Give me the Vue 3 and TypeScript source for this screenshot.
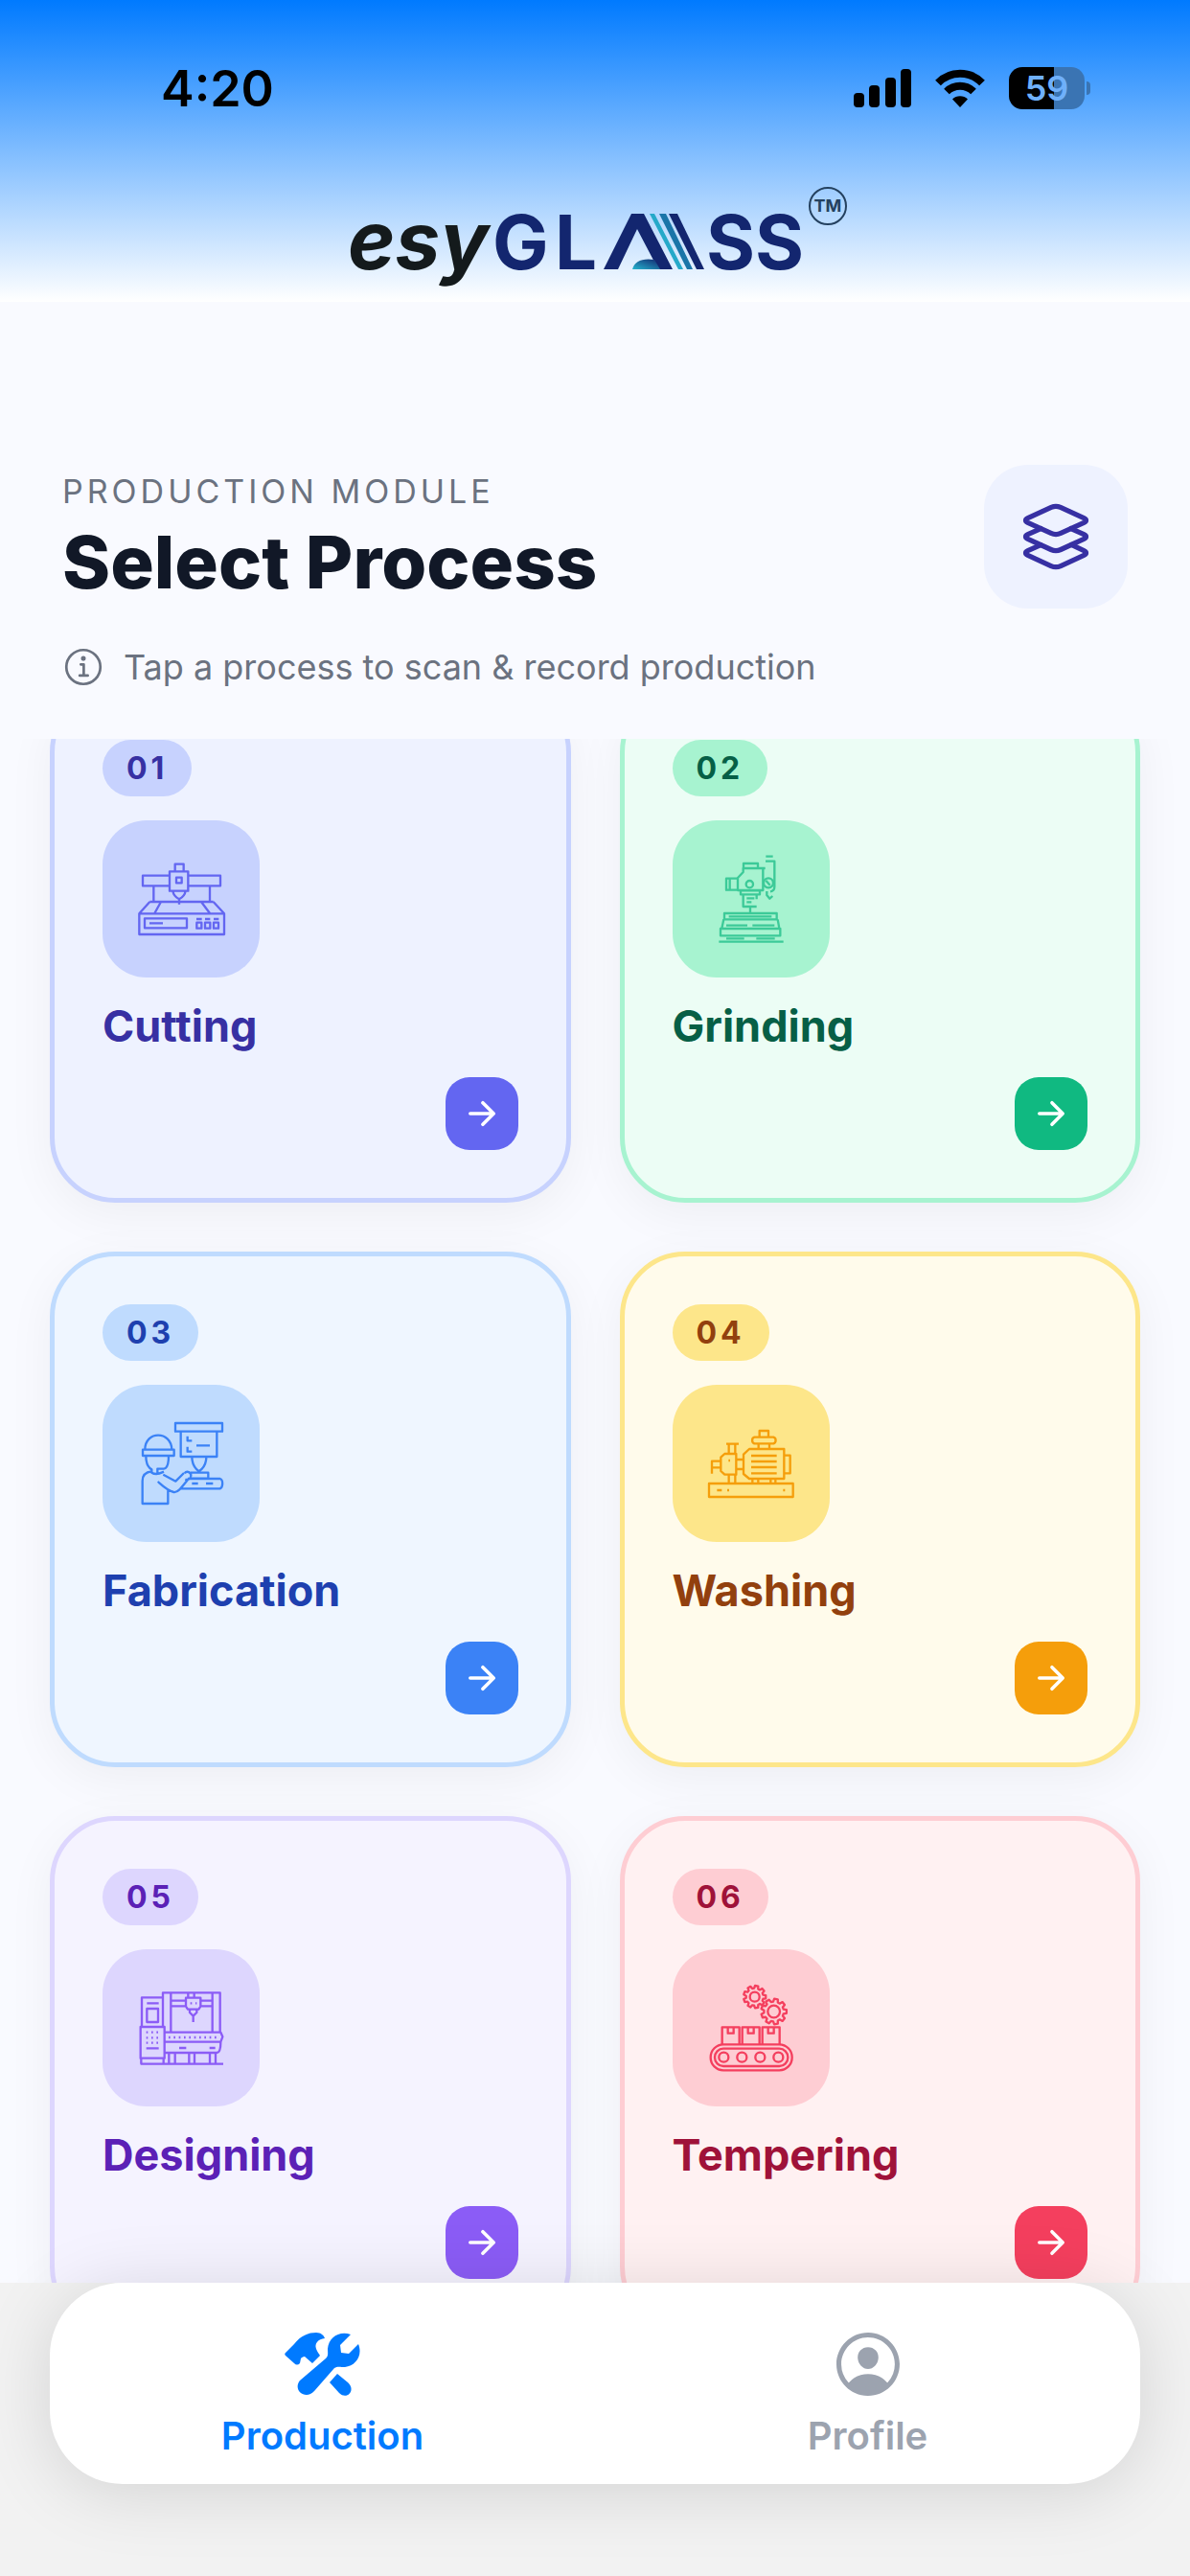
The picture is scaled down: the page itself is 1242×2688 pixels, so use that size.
<script setup lang="ts">
interface Process {
  number: string
  name: string
  icon: 'cutting' | 'grinding' | 'fabrication' | 'washing' | 'designing' | 'tempering'
}

const processes: Process[] = [
  { number: '01', name: 'Cutting', icon: 'cutting' },
  { number: '02', name: 'Grinding', icon: 'grinding' },
  { number: '03', name: 'Fabrication', icon: 'fabrication' },
  { number: '04', name: 'Washing', icon: 'washing' },
  { number: '05', name: 'Designing', icon: 'designing' },
  { number: '06', name: 'Tempering', icon: 'tempering' },
]

const gear = (cx: number, cy: number, outer: number, inner: number, teeth: number): string => {
  const points: string[] = []
  const step = (Math.PI * 2) / teeth
  for (let i = 0; i < teeth; i++) {
    const corners: [number, number][] = [[-0.34, inner], [-0.2, outer], [0.2, outer], [0.34, inner]]
    for (const [offset, radius] of corners) {
      const angle = (i + offset) * step
      points.push(`${(cx + radius * Math.cos(angle)).toFixed(1)},${(cy + radius * Math.sin(angle)).toFixed(1)}`)
    }
  }
  return points.join(' ')
}

const smallGear = gear(265, 159, 35, 27, 9)
const largeGear = gear(325, 205, 40, 31, 9)
</script>

<template>
  <div class="app">
    <header class="brand">
      <div class="status">
        <span class="time">4:20</span>
        <div class="indicators">
          <svg class="signal" viewBox="0 0 60 40" aria-label="Signal">
            <rect x="0" y="25" width="11" height="15" rx="4" />
            <rect x="16" y="17" width="11" height="23" rx="4" />
            <rect x="33" y="9" width="11" height="31" rx="4" />
            <rect x="49" y="0" width="11" height="40" rx="4" />
          </svg>
          <svg class="wifi" viewBox="0 0 54 40" aria-label="Wi-Fi">
            <path d="M4 14.500a32 32 0 0 1 46 0" />
            <path d="M13 23.500a20 20 0 0 1 28 0" />
            <path class="dot" d="M27 40l-8-8.500a11.500 11.500 0 0 1 16 0z" />
          </svg>
          <span class="battery"><span class="level">59</span></span>
        </div>
      </div>
      <svg class="logo" viewBox="356 190 530 115" role="img" aria-label="esyGLASS">
        <defs>
          <linearGradient id="teal" x1="0" y1="1" x2="1" y2="0">
            <stop offset="0" stop-color="#25b5cf" />
            <stop offset="1" stop-color="#13266f" />
          </linearGradient>
        </defs>
        <text class="logo-esy" x="363" y="281">esy</text>
        <text class="logo-name" x="514 579" y="281">GL</text>
        <path fill="#13266f" d="M630 281l29-58h13l30 58h-15l-22-42-20 42z" />
        <path fill="url(#teal)" d="M660 281c2-8 10-12 23-10l6 10z" />
        <path fill="#25a9c9" d="M678 223h5l30 58h-5z" />
        <path fill="#1a75a8" d="M688 223h7l28 58h-6z" />
        <path fill="#13266f" d="M698 223h9l28 58h-8z" />
        <text class="logo-name" x="737" y="281">SS</text>
        <circle cx="864" cy="215" r="19" fill="none" stroke="#24415f" stroke-width="2" />
        <text class="logo-tm" x="864" y="221" text-anchor="middle">TM</text>
      </svg>
    </header>

    <section class="intro">
      <div class="heading">
        <div class="titles">
          <p class="eyebrow">PRODUCTION MODULE</p>
          <h1>Select Process</h1>
        </div>
        <div class="layers">
          <svg viewBox="0 0 512 512" aria-hidden="true">
            <path d="M434.800 137.650l-149.360-68.100c-16.190-7.400-42.690-7.400-58.880 0L77.300 137.650c-17.600 8-17.600 21.090 0 29.090l148 67.500c16.890 7.700 44.690 7.700 61.580 0l148-67.500c17.520-8 17.520-21.100-.080-29.090z" />
            <path d="M160 308.520l-82.700 37.110c-17.600 8-17.600 21.100 0 29.100l148 67.500c16.890 7.690 44.690 7.690 61.580 0l148-67.500c17.600-8 17.600-21.100 0-29.100l-79.940-38.470" />
            <path d="M160 204.480l-82.800 37.160c-17.600 8-17.600 21.100 0 29.100l148 67.490c16.890 7.700 44.690 7.700 61.580 0l148-67.490c17.700-8 17.700-21.100.100-29.100L352 204.480" />
          </svg>
        </div>
      </div>
      <p class="hint">
        <svg viewBox="20 20 456 456" aria-hidden="true">
          <circle cx="248" cy="248" r="184" />
          <path d="M220 220h32v116M208 340h88" />
          <circle class="solid" cx="248" cy="156" r="26" />
        </svg>
        Tap a process to scan &amp; record production
      </p>
    </section>

    <main class="scroller">
      <div class="grid">
        <button v-for="item in processes" :key="item.number" type="button" class="card" :class="item.icon">
          <span class="badge">{{ item.number }}</span>
          <span class="picture">
            <svg v-if="item.icon === 'cutting'" viewBox="-69 18 492 492" aria-hidden="true">
              <path d="M158 178v-23h27v23M141 178h58v61h-58zM162 197h17v17h-17zM141 191H57v32h84M199 191h101v32H199M91 223v50M267 223v50M151 239c2 14 9 20 20 26 11-6 18-12 20-26M171 265v16M79 273h199M79 273l-33 37M278 273l34 37M114 273l-20 36M240 273l27 36M46 310h266v65H46zM63 325h132v30H63zM78 340h42M226 338h15v18h-15zM252 338h16v18h-16zM279 338h15v18h-15zM225 327h17M252 327h16M279 327h16" />
            </svg>
            <svg v-else-if="item.icon === 'grinding'" viewBox="8 18 492 492" aria-hidden="true">
              <path d="M230 168v-15h45v15M298 168h-69v12l-17 18v39h79v-69M212 200h-36v36h36M187 200v36M300 131h22M299 146h28v80c0 10-5 14-13 15M221 238h60v12h-60zM229 250v38h42M271 250v15M240 262h24M240 274h15M251 288v18M303 240v12l9 11 9-8M170 309h164v19H170zM168 328l-6 28M337 328l5 28M184 319h134M176 347h66M258 347h69M158 357h187v22H158zM153 398h202M176 388h56M270 388h58" />
              <circle cx="249" cy="218" r="11" /><circle cx="308" cy="214" r="15" /><path d="M300 206l13 15" />
            </svg>
            <svg v-else-if="item.icon === 'fabrication'" viewBox="-69 14 492 492" aria-hidden="true">
              <path d="M159 134h147v26H159zM176 160v79h113v-79M197 175v14h14M197 208v15h14M225 204h42M211 239c0 24 8 36 22 46 15-10 23-22 23-46M64 217c0-60 82-60 84 0M57 217h98v19H57zM67 236c0 24 8 38 18 43v10c16 10 31 0 38-3M138 236c0 26-4 40-15 41h-20v12M85 285c-20 2-29 12-29 30v71h80v-46M104 317c18 16 30 28 50 33 12 2 20-8 48-44M121 295l39 21 26-26M188 291c8-10 20-2 20 7s-10 16-18 12M207 289h55v18h-56M203 308h96c10 3 10 27 0 31H174M211 323h19M255 323h22" />
            </svg>
            <svg v-else-if="item.icon === 'washing'" viewBox="8 14 492 492" aria-hidden="true">
              <path d="M280 178v-20h28v20M264 178h60c9 3 9 16 0 20h-60c-9-4-9-17 0-20zM277 198v17M311 198v17M248 215h109v93H248l-18-15v-61zM357 235h19v56h-19M254 236h80M254 254h80M254 272h80M254 291h80M230 248h-23M230 278h-23M176 199h39M184 201v29M204 201v29M171 230h36v65h-36l-12-11v-43zM159 253h-28v39M133 273h26M184 295v27M204 295v27M122 323h263v42H122zM258 308v14M276 308v14M315 308v14M330 308v14M147 344h15M179 344h6M354 344h6M183 251h5" />
            </svg>
            <svg v-else-if="item.icon === 'designing'" viewBox="-69 10 492 492" aria-hidden="true">
              <path d="M120 252V146h179v124M120 161H54v91M70 179h37M70 196h35v42H70zM50 253h75v98H50zM145 146v122M275 146v122M145 171h44M241 171h34M145 188h44M241 188h34M199 146v16M218 146v16M192 162h46v27l-6 9h-34l-6-9zM204 198v10l11 11 11-11v-10M215 219v19M126 270h175l6 14-6 16H126M301 300c0 20-3 34-12 34H126M68 320h39M171 319h22M266 319h18M52 351v18M122 351v18M139 335v34M158 335v34M202 335v34M219 335v34M267 335v34M285 335v34M50 369h259" />
              <path stroke-dasharray="5 11" d="M138 286h156M68 270h44M68 287h44M68 303h44M206 179h20" />
            </svg>
            <svg v-else viewBox="8 10 492 492" aria-hidden="true">
              <polygon :points="smallGear" /><circle cx="265" cy="159" r="15" />
              <polygon :points="largeGear" /><circle cx="325" cy="205" r="19" />
              <path d="M163 307v-53h54v53M226 307v-53h54v53M289 307v-53h54v53M181 254v19h18v-19M244 254v19h18v-19M307 254v19h18v-19" />
              <rect x="127" y="308" width="255" height="81" rx="40" /><rect x="140" y="321" width="229" height="55" rx="27" />
              <circle cx="168" cy="348" r="15" /><circle cx="225" cy="348" r="15" /><circle cx="282" cy="348" r="15" /><circle cx="339" cy="348" r="15" />
            </svg>
          </span>
          <span class="name">{{ item.name }}</span>
          <span class="go">
            <svg viewBox="0 0 512 512" aria-hidden="true"><path d="M268 112l144 144-144 144M392 256H100" /></svg>
          </span>
        </button>
      </div>
    </main>

    <footer class="dock">
      <nav class="tabs">
        <a href="#production" class="tab active" aria-current="page">
          <svg viewBox="0 0 80 66" aria-hidden="true">
            <path d="M1 21l9-9C17 3 25 0 33 0c5 0 8 3 9 6-7 1-11 5-9 11 1 3 3 5 4 7l-8 8-8-7c-2 0-3 1-4 2l-1 5c-2 2-4 2-6 0l-9-8c-1-1-1-2 0-3z" />
            <path d="M77 12c5 12-3 23-14 24-5 0-8-1-11 1L31 61c-9 10-23-1-15-11l27-23c3-3 2-6 2-10C46 5 57-2 69 2l-11 11 1 8 8 1z" />
            <path d="M55 43l11 9c9 8-1 19-9 11l-10-11z" />
          </svg>
          Production
        </a>
        <a href="#profile" class="tab">
          <svg viewBox="0 0 512 512" aria-hidden="true">
            <path transform="translate(-59 -59) scale(1.230)" d="M258.900 48C141.920 46.420 46.420 141.920 48 258.900c1.560 112.190 92.910 203.540 205.100 205.100 117 1.600 212.480-93.900 210.880-210.880C462.440 140.910 371.090 49.560 258.900 48zm126.420 327.250a4 4 0 0 1-6.140-.320 124.270 124.270 0 0 0-32.350-29.590C321.370 329 289.110 320 256 320s-65.370 9-90.830 25.340a124.240 124.240 0 0 0-32.350 29.580 4 4 0 0 1-6.140.320A175.320 175.320 0 0 1 80 259c-1.630-97.310 78.220-178.760 175.570-179S432 158.810 432 256a175.320 175.320 0 0 1-46.680 119.250zM256 144c-19.720 0-37.550 7.390-50.220 20.820s-19 32-17.570 51.930C191.110 256 221.520 288 256 288s64.830-32 67.790-71.240c1.480-19.740-4.800-38.140-17.680-51.820C293.390 151.440 275.590 144 256 144z" />
          </svg>
          Profile
        </a>
      </nav>
    </footer>
  </div>
</template>

<style>
body {
  margin: 0;
  background: #f2f2f2;
}
</style>

<style scoped>
.app {
  display: flex;
  flex-direction: column;
  height: 100vh;
  overflow: hidden;
  background: #f9faff;
  color: #111827;
  font-family: Inter, "Liberation Sans", sans-serif;
}

.brand {
  display: flex;
  flex-direction: column;
  flex: none;
  padding: 60px 0 10px;
  background: linear-gradient(#007aff, #ffffff);
}

.status {
  display: flex;
  align-items: center;
  justify-content: space-between;
  height: 64px;
  padding: 0 104px 0 168px;
  color: #000;
}

.time {
  font-size: 52px;
  font-weight: 600;
}

.indicators {
  display: flex;
  align-items: center;
  gap: 24px;
}

.signal {
  width: 60px;
  height: 40px;
}

.wifi {
  width: 54px;
  height: 40px;
}

.wifi path {
  fill: none;
  stroke: #000;
  stroke-width: 8;
}

.wifi .dot {
  fill: #000;
  stroke: none;
}

.battery {
  position: relative;
  width: 79px;
  height: 44px;
  border-radius: 14px;
  background: linear-gradient(90deg, #000 59%, #3a74b3 59%);
  margin-right: 6px;
}

.battery::after {
  content: "";
  position: absolute;
  top: 15px;
  right: -6px;
  width: 4px;
  height: 14px;
  border-radius: 0 4px 4px 0;
  background: #3a74b3;
}

.level {
  display: block;
  color: #6fb0fa;
  font-size: 36px;
  font-weight: 600;
  line-height: 44px;
  text-align: center;
}

.logo {
  width: 530px;
  height: 115px;
  margin: 66px auto 0;
}

.logo-esy {
  fill: #141a1c;
  font: italic 700 84px Inter, sans-serif;
}

.logo-name {
  fill: #13266f;
  font: 700 78px Inter, sans-serif;
}

.logo-tm {
  fill: #24415f;
  font: 700 18px Inter, sans-serif;
}

.intro {
  flex: none;
  padding: 170px 65px 54px;
}

.heading {
  display: flex;
  align-items: center;
  justify-content: space-between;
}

.eyebrow {
  margin: 0 0 10px;
  color: #6b7280;
  font-size: 34px;
  font-weight: 400;
  line-height: 42px;
  letter-spacing: 4px;
}

h1 {
  margin: 0;
  font-size: 76px;
  font-weight: 800;
  line-height: 84px;
}

.layers {
  display: flex;
  align-items: center;
  justify-content: center;
  width: 150px;
  height: 150px;
  border-radius: 46px;
  background: #eef2ff;
}

.layers svg {
  width: 84px;
  height: 84px;
  fill: none;
  stroke: #3730a3;
  stroke-width: 32;
  stroke-linecap: round;
  stroke-linejoin: round;
}

.hint {
  display: flex;
  align-items: center;
  gap: 20px;
  margin: 40px 0 0;
  color: #6b7280;
  font-size: 36px;
  line-height: 42px;
}

.hint svg {
  width: 44px;
  height: 44px;
  margin: -1px 0;
  fill: none;
  stroke: currentColor;
  stroke-width: 28;
  stroke-linecap: round;
  stroke-linejoin: round;
}

.hint .solid {
  fill: currentColor;
  stroke: none;
}

.scroller {
  flex: 1;
  min-height: 0;
  overflow: hidden;
}

.grid {
  display: grid;
  grid-template-columns: 1fr 1fr;
  gap: 51px;
  margin-top: -54px;
  padding: 0 52px;
}

.card {
  display: flex;
  flex-direction: column;
  align-items: flex-start;
  padding: 50px;
  border: 5px solid var(--soft);
  border-radius: 68px;
  background: var(--tint);
  box-shadow: 0 12px 50px rgba(0, 0, 0, 0.05);
  color: var(--ink);
  font-family: inherit;
  text-align: left;
}

.cutting { --tint: #eef2ff; --soft: #c7d2fe; --ink: #3730a3; --accent: #6366f1; }
.grinding { --tint: #ecfdf5; --soft: #a7f3d0; --ink: #065f46; --accent: #10b981; }
.fabrication { --tint: #eff6ff; --soft: #bfdbfe; --ink: #1e40af; --accent: #3b82f6; }
.washing { --tint: #fffbeb; --soft: #fde68a; --ink: #92400e; --accent: #f59e0b; }
.designing { --tint: #f5f3ff; --soft: #ddd6fe; --ink: #5b21b6; --accent: #8b5cf6; }
.tempering { --tint: #fff1f2; --soft: #fecdd3; --ink: #9f1239; --accent: #f43f5e; }

.badge {
  padding: 0 25px;
  border-radius: 30px;
  background: var(--soft);
  font-size: 32px;
  font-weight: 700;
  line-height: 59px;
  letter-spacing: 4px;
}

.picture {
  width: 164px;
  height: 164px;
  margin-top: 25px;
  border-radius: 46px;
  background: var(--soft);
}

.picture svg {
  display: block;
  width: 100%;
  height: 100%;
  fill: none;
  stroke: var(--accent);
  stroke-width: 7;
  stroke-linejoin: round;
}

.grinding .picture svg {
  opacity: 0.7;
}

.name {
  margin-top: 25px;
  font-size: 45px;
  font-weight: 700;
  line-height: 52px;
}

.go {
  display: flex;
  align-items: center;
  justify-content: center;
  align-self: flex-end;
  width: 76px;
  height: 76px;
  margin-top: 27px;
  border-radius: 25px;
  background: var(--accent);
}

.go svg {
  width: 40px;
  height: 40px;
  fill: none;
  stroke: #fff;
  stroke-width: 46;
  stroke-linecap: round;
  stroke-linejoin: round;
}

.dock {
  position: relative;
  flex: none;
  padding: 0 52px 96px;
  background: #f2f2f2;
}

.tabs {
  display: flex;
  border-radius: 76px;
  background: #fff;
  box-shadow: 0 8px 75px rgba(0, 0, 0, 0.13);
}

.tab {
  display: flex;
  flex: 1;
  flex-direction: column;
  align-items: center;
  gap: 18px;
  padding: 52px 0 26px;
  color: #9ca3af;
  font-size: 40px;
  font-weight: 600;
  line-height: 48px;
  text-decoration: none;
}

.tab svg {
  width: 80px;
  height: 66px;
  fill: currentColor;
}

.tab.active {
  color: #007aff;
}
</style>
